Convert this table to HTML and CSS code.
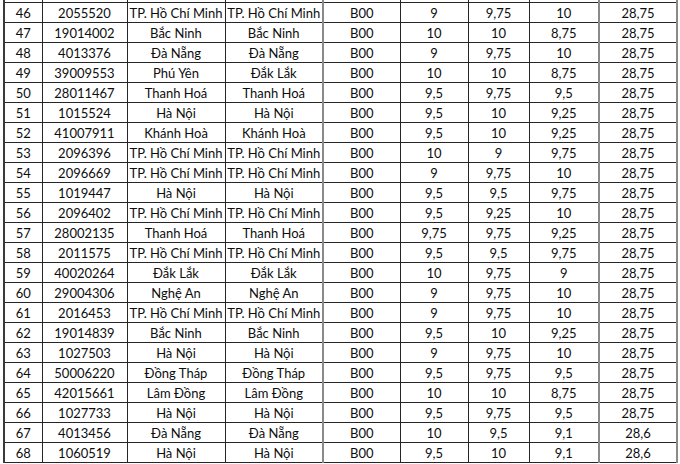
FILE: index.html
```html
<!DOCTYPE html>
<html lang="vi">
<head>
<meta charset="utf-8">
<title>Danh sách B00</title>
<link rel="stylesheet" href="styles.css">
</head>
<body>
<table class="sheet">
<colgroup>
<col class="c-stt"><col class="c-sbd"><col class="c-tinh"><col class="c-tinh2"><col class="c-khoi"><col class="c-m1"><col class="c-m2"><col class="c-m3"><col class="c-tong">
</colgroup>
<tbody>
<tr class="cut"><td></td><td></td><td></td><td></td><td class="g"></td><td></td><td></td><td></td><td class="g"></td></tr>
<tr><td>46</td><td>2055520</td><td>TP. Hồ Chí Minh</td><td>TP. Hồ Chí Minh</td><td class="g">B00</td><td>9</td><td>9,75</td><td>10</td><td class="g">28,75</td></tr>
<tr><td>47</td><td>19014002</td><td>Bắc Ninh</td><td>Bắc Ninh</td><td class="g">B00</td><td>10</td><td>10</td><td>8,75</td><td class="g">28,75</td></tr>
<tr><td>48</td><td>4013376</td><td>Đà Nẵng</td><td>Đà Nẵng</td><td class="g">B00</td><td>9</td><td>9,75</td><td>10</td><td class="g">28,75</td></tr>
<tr><td>49</td><td>39009553</td><td>Phú Yên</td><td>Đắk Lắk</td><td class="g">B00</td><td>10</td><td>10</td><td>8,75</td><td class="g">28,75</td></tr>
<tr><td>50</td><td>28011467</td><td>Thanh Hoá</td><td>Thanh Hoá</td><td class="g">B00</td><td>9,5</td><td>9,75</td><td>9,5</td><td class="g">28,75</td></tr>
<tr><td>51</td><td>1015524</td><td>Hà Nội</td><td>Hà Nội</td><td class="g">B00</td><td>9,5</td><td>10</td><td>9,25</td><td class="g">28,75</td></tr>
<tr><td>52</td><td>41007911</td><td>Khánh Hoà</td><td>Khánh Hoà</td><td class="g">B00</td><td>9,5</td><td>10</td><td>9,25</td><td class="g">28,75</td></tr>
<tr><td>53</td><td>2096396</td><td>TP. Hồ Chí Minh</td><td>TP. Hồ Chí Minh</td><td class="g">B00</td><td>10</td><td>9</td><td>9,75</td><td class="g">28,75</td></tr>
<tr><td>54</td><td>2096669</td><td>TP. Hồ Chí Minh</td><td>TP. Hồ Chí Minh</td><td class="g">B00</td><td>9</td><td>9,75</td><td>10</td><td class="g">28,75</td></tr>
<tr><td>55</td><td>1019447</td><td>Hà Nội</td><td>Hà Nội</td><td class="g">B00</td><td>9,5</td><td>9,5</td><td>9,75</td><td class="g">28,75</td></tr>
<tr><td>56</td><td>2096402</td><td>TP. Hồ Chí Minh</td><td>TP. Hồ Chí Minh</td><td class="g">B00</td><td>9,5</td><td>9,25</td><td>10</td><td class="g">28,75</td></tr>
<tr><td>57</td><td>28002135</td><td>Thanh Hoá</td><td>Thanh Hoá</td><td class="g">B00</td><td>9,75</td><td>9,75</td><td>9,25</td><td class="g">28,75</td></tr>
<tr><td>58</td><td>2011575</td><td>TP. Hồ Chí Minh</td><td>TP. Hồ Chí Minh</td><td class="g">B00</td><td>9,5</td><td>9,5</td><td>9,75</td><td class="g">28,75</td></tr>
<tr><td>59</td><td>40020264</td><td>Đắk Lắk</td><td>Đắk Lắk</td><td class="g">B00</td><td>10</td><td>9,75</td><td>9</td><td class="g">28,75</td></tr>
<tr><td>60</td><td>29004306</td><td>Nghệ An</td><td>Nghệ An</td><td class="g">B00</td><td>9</td><td>9,75</td><td>10</td><td class="g">28,75</td></tr>
<tr><td>61</td><td>2016453</td><td>TP. Hồ Chí Minh</td><td>TP. Hồ Chí Minh</td><td class="g">B00</td><td>9</td><td>9,75</td><td>10</td><td class="g">28,75</td></tr>
<tr><td>62</td><td>19014839</td><td>Bắc Ninh</td><td>Bắc Ninh</td><td class="g">B00</td><td>9,5</td><td>10</td><td>9,25</td><td class="g">28,75</td></tr>
<tr><td>63</td><td>1027503</td><td>Hà Nội</td><td>Hà Nội</td><td class="g">B00</td><td>9</td><td>9,75</td><td>10</td><td class="g">28,75</td></tr>
<tr><td>64</td><td>50006220</td><td>Đồng Tháp</td><td>Đồng Tháp</td><td class="g">B00</td><td>9,5</td><td>9,75</td><td>9,5</td><td class="g">28,75</td></tr>
<tr><td>65</td><td>42015661</td><td>Lâm Đồng</td><td>Lâm Đồng</td><td class="g">B00</td><td>10</td><td>10</td><td>8,75</td><td class="g">28,75</td></tr>
<tr><td>66</td><td>1027733</td><td>Hà Nội</td><td>Hà Nội</td><td class="g">B00</td><td>9,5</td><td>9,75</td><td>9,5</td><td class="g">28,75</td></tr>
<tr><td>67</td><td>4013456</td><td>Đà Nẵng</td><td>Đà Nẵng</td><td class="g">B00</td><td>10</td><td>9,5</td><td>9,1</td><td class="g">28,6</td></tr>
<tr><td>68</td><td>1060519</td><td>Hà Nội</td><td>Hà Nội</td><td class="g">B00</td><td>9,5</td><td>10</td><td>9,1</td><td class="g">28,6</td></tr>
<tr class="tail"><td></td><td></td><td></td><td></td><td class="g"></td><td></td><td></td><td></td><td class="g"></td></tr>
</tbody>
</table>
</body>
</html>
```
FILE: styles.css
```css
html, body {
  margin: 0;
  padding: 0;
  background: #ffffff;
  overflow: hidden;
}

.sheet {
  border-collapse: collapse;
  table-layout: fixed;
  width: 674px;
  margin-left: 3px;
  font-family: Lato, "Liberation Sans", sans-serif;
  font-size: 13px;
  color: #0d0d0d;
}

.c-stt { width: 38px; }
.c-sbd { width: 85px; }
.c-tinh { width: 98px; }
.c-tinh2 { width: 98px; }
.c-khoi { width: 77px; }
.c-m1 { width: 68px; }
.c-m2 { width: 61px; }
.c-m3 { width: 70px; }
.c-tong { width: 78px; }

.sheet td {
  border: 1px solid #262626;
  padding: 1px 0 0;
  height: 18px;
  line-height: 18px;
  text-align: center;
  white-space: nowrap;
  overflow: hidden;
}

.sheet td.g {
  border-left: 2px solid #8a8a8a;
}

.sheet td:last-child {
  border-right: 2px solid #8a8a8a;
}

.sheet td:first-child {
  border-left: 2px solid #3a3a3a;
}

.sheet .cut td {
  height: 2px;
  line-height: 2px;
  padding-top: 0;
  border-top: none;
}

.sheet .tail td {
  height: 0;
  line-height: 0;
  padding-top: 0;
  border-bottom: none;
}
```
